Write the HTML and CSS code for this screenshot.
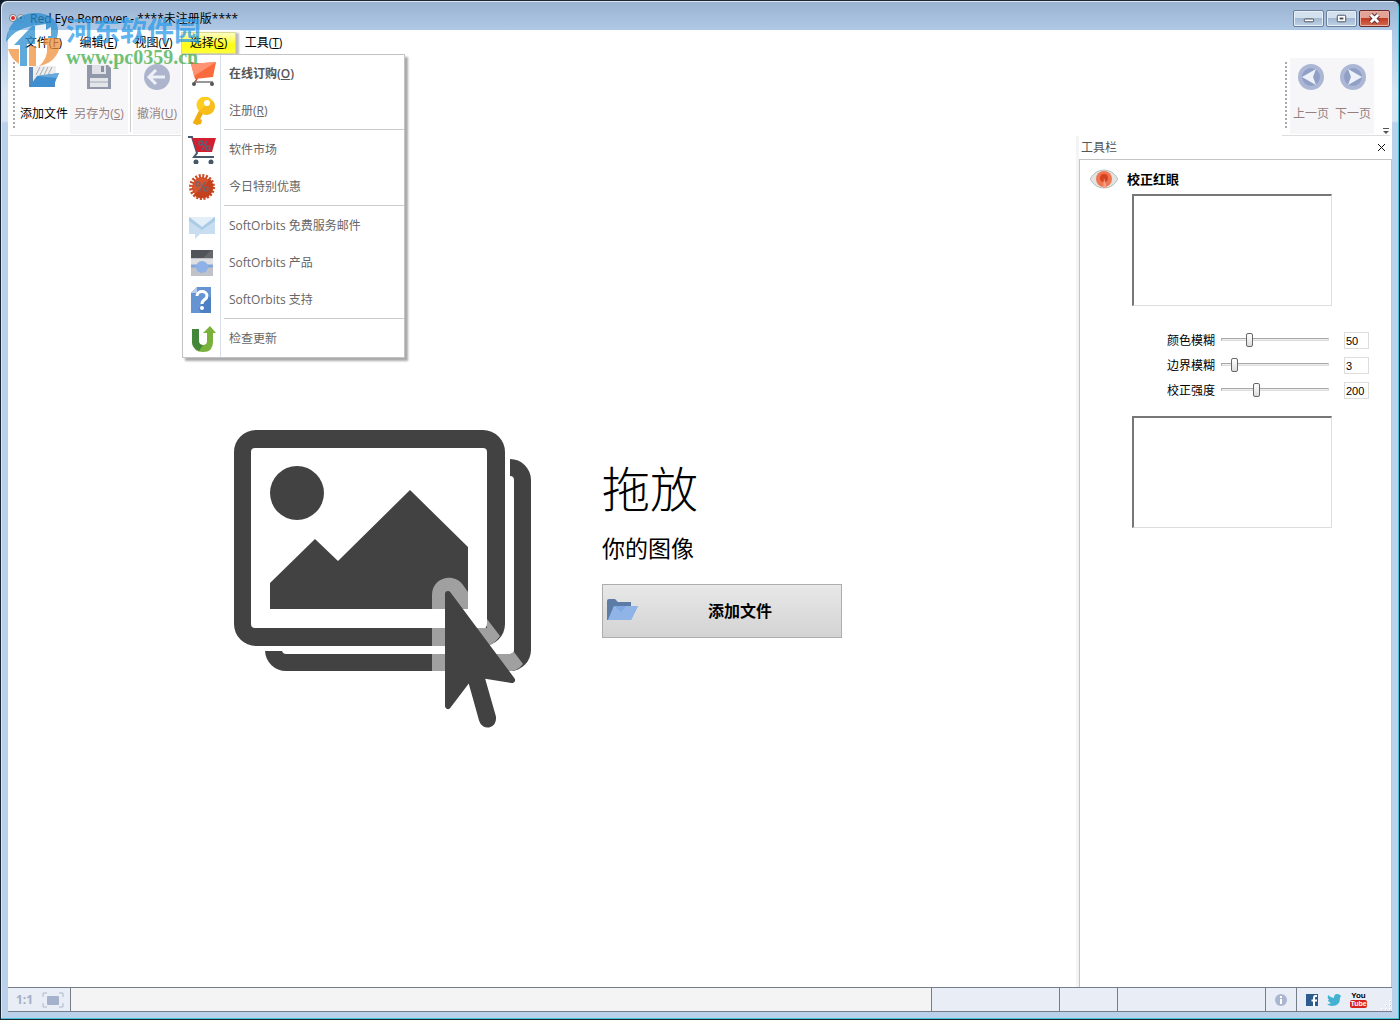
FILE: index.html
```html
<!DOCTYPE html>
<html lang="zh-CN">
<head>
<meta charset="utf-8">
<title>Red Eye Remover</title>
<link rel="stylesheet" href="styles.css">
</head>
<body>
<div class="window">
  <header class="titlebar">
    <svg class="app-icon" viewBox="0 0 16 16"><circle cx="4" cy="7" r="3.500" fill="#fff" stroke="#777"/><circle cx="12" cy="7" r="3.500" fill="#dfe6ee" stroke="#889"/><circle cx="4" cy="7" r="2" fill="#d22"/><circle cx="12" cy="7" r="1.500" fill="#345"/></svg>
    <h1 class="title">Red Eye Remover - ****未注册版****</h1>
    <div class="win-buttons">
      <button class="win-btn" aria-label="最小化"><svg viewBox="0 0 30 16"><rect x="10.500" y="8.500" width="10" height="3" rx="1" fill="#fff" stroke="#444a58"/></svg></button>
      <button class="win-btn" aria-label="最大化"><svg viewBox="0 0 30 16"><rect x="10.500" y="4.500" width="9" height="7" rx="1" fill="#fff" stroke="#444a58"/><rect x="13.500" y="7.500" width="3" height="1" fill="#9ab" stroke="#444a58"/></svg></button>
      <button class="win-btn close" aria-label="关闭"><svg viewBox="0 0 30 16"><path d="M11 4l8 8M19 4l-8 8" stroke="#5b3038" stroke-width="5"/><path d="M11 4l8 8M19 4l-8 8" stroke="#fff" stroke-width="3"/></svg></button>
    </div>
  </header>

  <div class="client">
    <nav class="menubar">
      <div class="menu"><button class="menu-btn">文件(<u>F</u>)</button></div>
      <div class="menu"><button class="menu-btn">编辑(<u>E</u>)</button></div>
      <div class="menu"><button class="menu-btn">视图(<u>V</u>)</button></div>
      <div class="menu">
        <button class="menu-btn open">选择(<u>S</u>)</button>
        <div class="popup">
          <button class="item strong"><span class="ico"><svg viewBox="0 0 28 28"><path d="M2 3h3l4 16-2 3" fill="none" stroke="#c9563b" stroke-width="1.500"/><path d="M3 4l25-2-3 15-18 2z" fill="#fb6a3c"/><path d="M3 4l25-2-22 14z" fill="#ff9474"/><path d="M6 22h19" stroke="#777" stroke-width="1.500"/><circle cx="6" cy="24" r="2" fill="#555"/><circle cx="24" cy="24" r="2" fill="#555"/></svg></span><span class="txt">在线订购(<u>O</u>)</span></button>
          <button class="item"><span class="ico"><svg viewBox="0 0 28 28"><path d="M14 13L7 27" stroke="#f0ad10" stroke-width="5"/><path d="M8 20l6 3-1 4-5 1z" fill="#f0ad10"/><circle cx="17" cy="8" r="8.500" fill="#ffcc20"/><path d="M11 14L24 3a8 8 0 0 1-11 13z" fill="#f8bd1b"/><circle cx="19" cy="6" r="3" fill="#fff"/></svg></span><span class="txt">注册(<u>R</u>)</span></button>
          <hr>
          <button class="item"><span class="ico"><svg viewBox="0 0 28 28"><path d="M0 1h4l5 16-3 4h20" fill="none" stroke="#46586b" stroke-width="2"/><path d="M4 2h24l-4 14H9z" fill="#d32031"/><circle cx="13" cy="7" r="2" fill="none" stroke="#596579" stroke-width="1.500"/><circle cx="20" cy="12" r="2" fill="none" stroke="#596579" stroke-width="1.500"/><path d="M19 5l-5 9" stroke="#596579" stroke-width="1.500"/><circle cx="8" cy="26" r="2.500" fill="#465767"/><circle cx="23" cy="26" r="2.500" fill="#465767"/></svg></span><span class="txt">软件市场</span></button>
          <button class="item"><span class="ico"><svg viewBox="0 0 28 28"><circle cx="14" cy="14" r="10" fill="#d9532c"/><circle cx="14" cy="14" r="11" fill="none" stroke="#c94b27" stroke-width="4" stroke-dasharray="2 1.450"/><path d="M6 22L22 6a11 11 0 0 1-16 16z" fill="#c5411e"/><circle cx="10" cy="11" r="2" fill="none" stroke="#7b6469" stroke-width="1.500"/><circle cx="18" cy="16" r="2" fill="none" stroke="#7b6469" stroke-width="1.500"/><path d="M17 9l-6 10" stroke="#7b6469" stroke-width="1.500"/></svg></span><span class="txt">今日特别优惠</span></button>
          <hr>
          <button class="item"><span class="ico"><svg viewBox="0 0 28 28"><path d="M1 5h26v17H12l-5 5v-5H1z" fill="#c8def0"/><path d="M1 5h26L14 15z" fill="#e3eff8"/><path d="M1 5l13 10L27 5v4L14 18 1 9z" fill="#aacbe6"/></svg></span><span class="txt">SoftOrbits 免费服务邮件</span></button>
          <button class="item"><span class="ico"><svg viewBox="0 0 28 28"><rect x="3" y="1" width="22" height="10" fill="#505357"/><path d="M14 10l9-9h2v9z" fill="#65686b"/><path d="M3 9h22v18H3z" fill="#bfc3c8"/><path d="M3 10h22v6H3z" fill="#dedfe0"/><path d="M3 17h22" stroke="#83a6df" stroke-width="3"/><circle cx="14" cy="18" r="6" fill="#8eb1e7"/></svg></span><span class="txt">SoftOrbits 产品</span></button>
          <button class="item"><span class="ico"><svg viewBox="0 0 28 28"><path d="M9 1h14v26H3V7z" fill="#6694d2"/><path d="M9 1v6H3z" fill="#b7cdea"/><path d="M20 9l3 3v15H13l-2-4z" fill="#4d7fc3"/><path d="M9 10c0-6 10-6 10 0 0 4-5 3-5 8" fill="none" stroke="#fff" stroke-width="3"/><circle cx="14" cy="22" r="2" fill="#fff"/></svg></span><span class="txt">SoftOrbits 支持</span></button>
          <hr>
          <button class="item"><span class="ico"><svg viewBox="0 0 28 28"><path d="M4 4h7v12q0 4 4 4t4-4V8h-4l7-7 6 7h-3v9q0 10-10 10T4 17z" fill="#7ab13b"/><path d="M4 4h7v12q0 4 4 4l-4 6Q4 23 4 17z" fill="#43883a"/></svg></span><span class="txt">检查更新</span></button>
        </div>
      </div>
      <div class="menu"><button class="menu-btn">工具(<u>T</u>)</button></div>
    </nav>

    <div class="toolbars">
      <div class="toolbar">
        <i class="grip"></i>
        <button class="tool"><svg viewBox="0 0 32 32"><path d="M1 6h6l20 0v20H1z" fill="#6186b5"/><path d="M5 5h23v16H5z" fill="#eceeef"/><path d="M8 14l4-8M12 14l4-8M16 14l4-8M20 14l4-8" stroke="#aaa"/><path d="M9 15l22-3-6 14H1z" fill="#3f8fd0"/><path d="M9 15l22-3-2 5z" fill="#69aadc"/></svg>添加文件</button>
        <button class="tool off save"><svg viewBox="0 0 32 32"><path d="M4 4h21l3 3v21H4z" fill="#9198a9"/><path d="M9 4h14v9H9z" fill="#dfe1e6"/><path d="M18 5h3v6h-3z" fill="#8890a3"/><path d="M7 17h18v9H7z" fill="#e4e5e9"/><path d="M7 21h18" stroke="#a3a9b7"/></svg><span>另存为(<u>S</u>)</span></button>
        <i class="split"></i>
        <button class="tool off undo"><svg viewBox="0 0 32 32"><circle cx="16" cy="16" r="13" fill="#adb5cd"/><path d="M24 16H9M15 9l-7 7 7 7" fill="none" stroke="#edf0f7" stroke-width="3"/></svg><span>撤消(<u>U</u>)</span></button>
      </div>
      <div class="toolbar right">
        <i class="grip"></i>
        <button class="tool off nav"><svg viewBox="0 0 32 32"><circle cx="16" cy="16" r="13" fill="#acb7d6"/><circle cx="16" cy="16" r="9" fill="#909fc6"/><path d="M7 16l14-8-3 8 3 8z" fill="#edf1f9"/></svg>上一页</button>
        <button class="tool off nav"><svg viewBox="0 0 32 32"><circle cx="16" cy="16" r="13" fill="#acb7d6"/><circle cx="16" cy="16" r="9" fill="#909fc6"/><path d="M25 16l-14-8 3 8-3 8z" fill="#edf1f9"/></svg>下一页</button>
        <button class="more" aria-label="更多"><svg viewBox="0 0 8 8"><path d="M1 1.500h6" stroke="#555"/><path d="M1 4h6L4 7z" fill="#555"/></svg></button>
      </div>
    </div>

    <div class="body">
      <main class="drop">
        <svg class="picture" viewBox="0 0 300 300" role="img" aria-label="图像">
          <g fill="#424242">
            <path d="M276 29a21 21 0 0 1 21 21v170a21 21 0 0 1-21 21H52a21 21 0 0 1-21-20h17q1 3 4 3h224q4 0 4-4V50q0-4-4-4z"/>
            <path fill="#fff" d="M22-4h228a25 25 0 0 1 25 25v175a25 25 0 0 1-25 25H22a25 25 0 0 1-25-25V21A25 25 0 0 1 22-4z"/>
            <path fill-rule="evenodd" d="M22 0h227a22 22 0 0 1 22 22v172a22 22 0 0 1-22 22H22a22 22 0 0 1-22-22V22A22 22 0 0 1 22 0zm-1 18q-4 0-4 4v172q0 4 4 4h228q4 0 4-4V22q0-4-4-4z"/>
            <circle cx="63" cy="63" r="27"/>
            <path d="M36 153l45-44 23 22 72-71 58 57v62H36z"/>
          </g>
          <g fill="#a0a0a0">
            <path d="M198 179v-14c0-18 22-23 31-10l5 7v17zM198 198h55v-9l13 17c-6 8-10 10-17 10h-51zM198 224h78l4-2 9 12c-5 6-9 7-13 7h-78z"/>
          </g>
          <path fill="#fff" d="M211 179h29l12 19h-41zM211 216h45l6 8h-51z"/>
          <path fill="#424242" stroke="#424242" stroke-width="6" stroke-linejoin="round" d="M214 164l64 86-31-5 12 42c1 9-9 10-11 3l-12-43-22 29z"/>
        </svg>
        <section class="copy">
          <h2 class="big">拖放</h2>
          <p class="sub">你的图像</p>
          <button class="add"><svg viewBox="0 0 32 24"><path d="M0 2q0-2 2-2h6l3 3h13v18H0z" fill="#5c7ba5"/><path d="M7 7h24l-7 14H1z" fill="#7fa8e1"/><path d="M1 21l6-14 7 6 5-6h12l-7 14z" fill="#91b4e8"/></svg><span>添加文件</span></button>
        </section>
      </main>

      <aside class="panel">
        <div class="panel-head"><span>工具栏</span><button class="x" aria-label="关闭"><svg viewBox="0 0 9 9"><path d="M1 1l7 7M8 1L1 8" stroke="#111"/></svg></button></div>
        <div class="panel-body">
          <h3 class="tool-title"><svg viewBox="0 0 28 20"><path d="M0 10Q5 1 14 1t14 9q-5 9-14 9T0 10z" fill="#e2e3e1" stroke="#b5c0c4"/><circle cx="14" cy="10" r="8" fill="#ef7450"/><circle cx="14" cy="9" r="4" fill="#d64120"/><path d="M14 9l3 10h-4z" fill="#f2a18a"/></svg>校正红眼</h3>
          <div class="preview"></div>
          <div class="sliders">
            <label for="r1">颜色模糊</label><input type="range" id="r1" min="0" max="100" value="24"><input type="text" aria-label="颜色模糊值" value="50">
            <label for="r2">边界模糊</label><input type="range" id="r2" min="0" max="100" value="9"><input type="text" aria-label="边界模糊值" value="3">
            <label for="r3">校正强度</label><input type="range" id="r3" min="0" max="100" value="31"><input type="text" aria-label="校正强度值" value="200">
          </div>
          <div class="preview"></div>
        </div>
      </aside>
    </div>

    <footer class="status">
      <div class="cell zoom"><button class="one">1:1</button><button aria-label="适合窗口"><svg width="22" height="16" viewBox="0 0 22 16"><rect x="5" y="4" width="12" height="9" rx="1" fill="#a6b2cc"/><path d="M1 5V1h4M17 1h4v4M21 11v4h-4M5 15H1v-4" fill="none" stroke="#b0b8ca"/></svg></button></div>
      <div class="cell message"></div>
      <div class="cell c1"></div>
      <div class="cell c2"></div>
      <div class="cell c3"></div>
      <div class="cell info"><button aria-label="信息"><svg width="14" height="14" viewBox="0 0 14 14"><circle cx="7" cy="7" r="6" fill="#aab6cf"/><path d="M7 6v5M7 3v2" stroke="#fff" stroke-width="2"/></svg></button></div>
      <div class="cell social">
        <a href="#" aria-label="Facebook"><svg width="12" height="12" viewBox="0 0 12 12"><path d="M0 0h12v12H0z" fill="#2c5c8e"/><path d="M11 2H9.500Q8 2 8 4v8M5.500 6.500H11" fill="none" stroke="#fff" stroke-width="2"/></svg></a>
        <a href="#" aria-label="Twitter"><svg width="14" height="12" viewBox="0 0 14 12"><path d="M1 1q3 3 6 3 0-4 3-4 2 0 3 1l1 1-1 2Q13 12 5 12q-3 0-5-2 3 0 4-1-3-1-3-3h1Q0 4 1 1z" fill="#43b2d2"/></svg></a>
        <a href="#" class="yt" aria-label="YouTube"><span>You</span><b>Tube</b></a>
        <svg class="resize" width="12" height="12" viewBox="0 0 12 12"><path d="M9 1h2v2H9zM5 5h2v2H5zM9 5h2v2H9zM1 9h2v2H1zM5 9h2v2H5zM9 9h2v2H9z" fill="#fff"/><path d="M10 2h1v1h-1zM6 6h1v1H6zM10 6h1v1h-1zM2 10h1v1H2zM6 10h1v1H6zM10 10h1v1h-1z" fill="#c2c8d4"/></svg>
      </div>
    </footer>
  </div>

  <div class="watermark">
    <svg viewBox="0 0 58 60"><path d="M1 34C2 16 14 5 30 5c14 0 24 7 23 19-1 9-5 15-10 19V28H30v8h-8v22h-7V37H9l18-19q-17 3-26 16z" fill="#2b8ed0"/><path d="M27 18l14-2v6l5-3v9H30V18z" fill="#fff"/><path d="M3 41h11v15Q6 51 3 41zM24 38h7v20h-7zM39 30h16c2 14-7 26-21 28 5-4 8-10 8-16v-5h-4z" fill="#f1913c"/></svg>
    <div><p class="wm-name">河东软件园</p><p class="wm-url">www.pc0359.cn</p></div>
  </div>
</div>
</body>
</html>
```
FILE: styles.css
```css
* { box-sizing: border-box; }
body {
  margin: 0;
  background: #0b1c26;
  color: #000;
  font: 12px/16px "Open Sans", "Noto Sans CJK SC", sans-serif;
}
h1, h2, h3, p { margin: 0; font-size: inherit; font-weight: normal; }
button { padding: 0; border: 0; background: none; font: inherit; color: inherit; }
svg { display: block; flex: none; }
.window {
  position: relative;
  display: flex;
  flex-direction: column;
  min-height: 100vh;
  padding: 0 7px 7px;
  border: 1px solid #1c2733;
  border-radius: 7px 7px 0 0;
  background: linear-gradient(#98b2d0, #b0c9e6 30px, #d5e3f2 90px, #d5e3f2 120px, #b9d1ea 122px);
  box-shadow: inset -1px -1px #45c3d8, inset 1px 1px #dce8f4;
}
.titlebar { display: flex; align-items: center; height: 29px; padding: 6px 2px 0 1px; }
.app-icon { width: 16px; height: 16px; }
.title { flex: 1; padding-left: 5px; }
.win-buttons { display: flex; gap: 2px; }
.win-btn {
  width: 31px;
  height: 17px;
  border: 1px solid #6c7f97;
  border-radius: 2px;
  background: linear-gradient(#d3e0ee 45%, #a3b9d2 50%, #bed2e6);
  box-shadow: inset 0 0 0 1px #e6eef7;
}
.win-btn svg { width: 29px; height: 15px; }
.win-btn.close { border-color: #6b2a2a; background: linear-gradient(#e2a295 45%, #c23a24 50%, #d3694f); box-shadow: inset 0 0 0 1px #e8b1a6; }
.client { flex: 1; display: flex; flex-direction: column; background: #fff; }

.menubar { display: flex; height: 25px; padding: 2px 0 0 8px; }
.menu { position: relative; width: 55px; }
.menu-btn { width: 100%; height: 22px; line-height: 22px; text-align: center; }
.menu-btn.open { background: linear-gradient(#ffffc8, #fdfd12 60%, #ffff3a); border: 1px solid #d8d890; box-shadow: 3px 1px 2px #bbb; line-height: 20px; }
.popup {
  position: absolute;
  left: 1px;
  top: 22px;
  z-index: 5;
  width: 223px;
  border: 1px solid #c3c3c3;
  background: linear-gradient(90deg, #fff 37px, #d8dfe8 37px, #d8dfe8 38px, #fff 38px);
  box-shadow: 3px 3px 2px #aaa;
}
.item { display: flex; align-items: center; width: 100%; height: 37px; color: #666; text-align: left; }
.item .ico { width: 46px; padding-left: 5px; }
.item svg { width: 28px; height: 28px; }
.item.strong { font-weight: 600; color: #555; }
.popup hr { height: 2px; margin: 0 0 0 41px; border: 0; border-top: 1px solid #ccc; }

.toolbars { display: flex; justify-content: space-between; height: 81px; }
.toolbar { display: flex; align-items: flex-start; padding: 3px 0 0 3px; margin-left: 2px; border-bottom: 1px solid #ddd; }
.toolbar.right { margin: 0 2px 0 0; }
.grip { width: 2px; height: 68px; margin: 4px 3px 0 0; background: repeating-linear-gradient(#aaa 0 2px, #fff 2px 4px); }
.tool { display: flex; flex-direction: column; align-items: center; gap: 13px; width: 52px; height: 76px; padding-top: 3px; }
.tool svg { width: 32px; height: 32px; }
.tool.off { color: #977f80; background: #f6f6f8; }
.tool.save { width: 58px; }
.tool.undo { width: 48px; }
.tool.nav { width: 42px; }
.split { width: 1px; height: 74px; margin: 0 2px; background: #ccc; }
.more { align-self: flex-end; margin: 0 0 0 8px; }
.more svg { width: 8px; height: 8px; }

.body { flex: 1; display: flex; }
.drop { flex: 1; display: flex; align-items: center; justify-content: center; padding: 36px 8px 0 0; }
.picture { width: 300px; height: 300px; overflow: visible; }
.copy { width: 240px; margin: 0 0 58px 68px; }
.big { font-size: 48px; line-height: 52px; font-weight: 300; }
.sub { margin: 17px 0 20px; font-size: 23px; line-height: 32px; }
.add {
  display: flex;
  align-items: center;
  width: 100%;
  height: 54px;
  padding: 0 4px;
  border: 1px solid #adadad;
  background: linear-gradient(#e8e8e8, #d3d3d3);
  font-size: 16px;
  font-weight: 700;
}
.add svg { width: 32px; height: 24px; }
.add span { flex: 1; padding-left: 4px; text-align: center; }

.panel { display: flex; flex-direction: column; width: 316px; border-left: 3px solid #f4f4f4; }
.panel-head { display: flex; align-items: center; justify-content: space-between; height: 23px; padding: 0 6px 0 2px; color: #555; }
.x svg { width: 9px; height: 9px; }
.panel-body { flex: 1; border: 1px solid #c4c4c4; border-width: 1px 1px 0 1px; padding: 7px 0 0 10px; }
.tool-title { display: flex; align-items: center; gap: 9px; height: 24px; font-size: 13px; font-weight: 700; }
.tool-title svg { width: 28px; height: 20px; }
.preview { width: 200px; height: 112px; margin: 3px 0 0 42px; border: 1px solid #ddd; border-width: 2px 1px 1px 2px; border-top-color: #777; border-left-color: #777; }
.sliders { display: grid; grid-template-columns: 48px 108px 25px; grid-auto-rows: 25px; align-items: center; margin: 22px 0 13px 77px; }
.sliders label { line-height: 20px; }
.sliders input[type="range"] { appearance: none; width: 108px; height: 16px; margin: 0 0 2px 6px; background: none; }
.sliders input[type="range"]::-webkit-slider-runnable-track { height: 3px; border: 1px solid #aaa; border-color: #a8a8a8 #ddd #ddd #a8a8a8; background: #eee; }
.sliders input[type="range"]::-webkit-slider-thumb { appearance: none; width: 7px; height: 14px; margin-top: -6px; border: 1px solid #666; border-radius: 2px; background: linear-gradient(#fff, #ddd); }
.sliders input[type="text"] { width: 25px; height: 17px; margin-left: 21px; padding: 0 1px; border: 1px solid #ddd; font: 11px/15px "Liberation Sans", sans-serif; }

.status { display: flex; height: 25px; border: 1px solid #777d88; border-width: 1px 0; background: #e9edf5; }
.cell { display: flex; align-items: center; border-right: 1px solid #777d88; }
.zoom { width: 63px; padding-left: 8px; gap: 9px; }
.one { color: #a4afc6; font-weight: 700; }
.message { flex: 1; background: #f4f4f4; }
.c1 { width: 128px; }
.c2 { width: 58px; }
.c3 { width: 148px; }
.info { width: 31px; justify-content: center; }
.social { width: 95px; padding-left: 9px; gap: 9px; border-right: 0; }
.yt { width: 17px; color: #000; text-decoration: none; font: bold 8px/8px "Liberation Sans", sans-serif; text-align: center; }
.yt span, .yt b { display: block; }
.yt b { border-radius: 2px; background: #d8231f; color: #fff; font-size: 7px; }
.resize { align-self: flex-end; margin-left: 4px; }

.watermark { position: absolute; left: 4px; top: 7px; z-index: 9; display: flex; gap: 3px; opacity: .75; pointer-events: none; }
.watermark svg { width: 58px; height: 60px; }
.wm-name { margin-top: 7px; color: #2b9be8; font-size: 27px; line-height: 32px; font-weight: 700; }
.wm-url { color: #3fae49; font: bold 20px/20px "Liberation Serif", serif; }
```
